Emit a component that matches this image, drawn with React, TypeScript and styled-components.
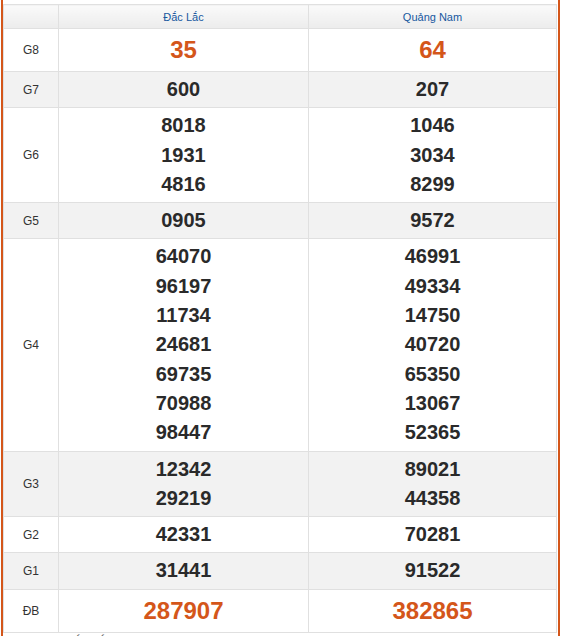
import React from "react";
import styled, { createGlobalStyle } from "styled-components";

const Global = createGlobalStyle`
  html, body { margin: 0; padding: 0; background: #fff; }
  body { font-family: "Liberation Sans", Arial, sans-serif; color: #333; }
`;

const Frame = styled.div`
  box-sizing: border-box;
  width: 559px;
  margin-left: 1px;
  border-left: 2px solid #d4561a;
  border-right: 2px solid #d4561a;
  padding: 4px 2px 0 0;
  min-height: 636px;
`;

const Table = styled.table`
  width: 553px;
  border-collapse: collapse;
  table-layout: fixed;
  border: 1px solid #e0e0e0;
`;

const HeadCell = styled.th`
  height: 23px;
  padding: 0;
  border: 1px solid #e0e0e0;
  background: linear-gradient(#fafafa, #ececec);
  color: #17589f;
  font-size: 11px;
  font-weight: normal;
  text-align: center;
  vertical-align: middle;
`;

const Row = styled.tr<{ $alt: boolean }>`
  background: ${(p) => (p.$alt ? "#f2f2f2" : "#ffffff")};
`;

const Label = styled.td`
  border: 1px solid #e0e0e0;
  padding: 3px 0;
  text-align: center;
  vertical-align: middle;
  font-size: 12px;
  color: #333;
`;

const Cell = styled.td`
  border: 1px solid #e0e0e0;
  padding: 3px 0;
  text-align: center;
  vertical-align: middle;
`;

const Num = styled.div<{ $big: boolean }>`
  font-weight: bold;
  font-size: ${(p) => (p.$big ? "24px" : "20px")};
  line-height: ${(p) => (p.$big ? "36px" : "29.3px")};
  color: ${(p) => (p.$big ? "#d4561a" : "#2a2a2a")};
`;

const Footer = styled.div`
  font-size: 13px;
  line-height: 16px;
  color: #444;
  padding-left: 6px;
  margin-top: 1px;
`;

type Prize = { label: string; a: string[]; b: string[]; big?: boolean };

const prizes: Prize[] = [
  { label: "G8", a: ["35"], b: ["64"], big: true },
  { label: "G7", a: ["600"], b: ["207"] },
  { label: "G6", a: ["8018", "1931", "4816"], b: ["1046", "3034", "8299"] },
  { label: "G5", a: ["0905"], b: ["9572"] },
  {
    label: "G4",
    a: ["64070", "96197", "11734", "24681", "69735", "70988", "98447"],
    b: ["46991", "49334", "14750", "40720", "65350", "13067", "52365"],
  },
  { label: "G3", a: ["12342", "29219"], b: ["89021", "44358"] },
  { label: "G2", a: ["42331"], b: ["70281"] },
  { label: "G1", a: ["31441"], b: ["91522"] },
  { label: "ĐB", a: ["287907"], b: ["382865"], big: true },
];

export default function App() {
  return (
    <>
      <Global />
      <Frame>
        <Table>
          <colgroup>
            <col style={{ width: 55 }} />
            <col style={{ width: 250 }} />
            <col style={{ width: 248 }} />
          </colgroup>
          <thead>
            <tr>
              <HeadCell />
              <HeadCell>Đắc Lắc</HeadCell>
              <HeadCell>Quảng Nam</HeadCell>
            </tr>
          </thead>
          <tbody>
            {prizes.map((p, i) => (
              <Row key={p.label} $alt={i % 2 === 1}>
                <Label>{p.label}</Label>
                <Cell>
                  {p.a.map((n) => (
                    <Num key={n} $big={!!p.big}>{n}</Num>
                  ))}
                </Cell>
                <Cell>
                  {p.b.map((n) => (
                    <Num key={n} $big={!!p.big}>{n}</Num>
                  ))}
                </Cell>
              </Row>
            ))}
          </tbody>
        </Table>
        <Footer>Đầu đuôi Đắc Lắc - Quảng Nam</Footer>
      </Frame>
    </>
  );
}
